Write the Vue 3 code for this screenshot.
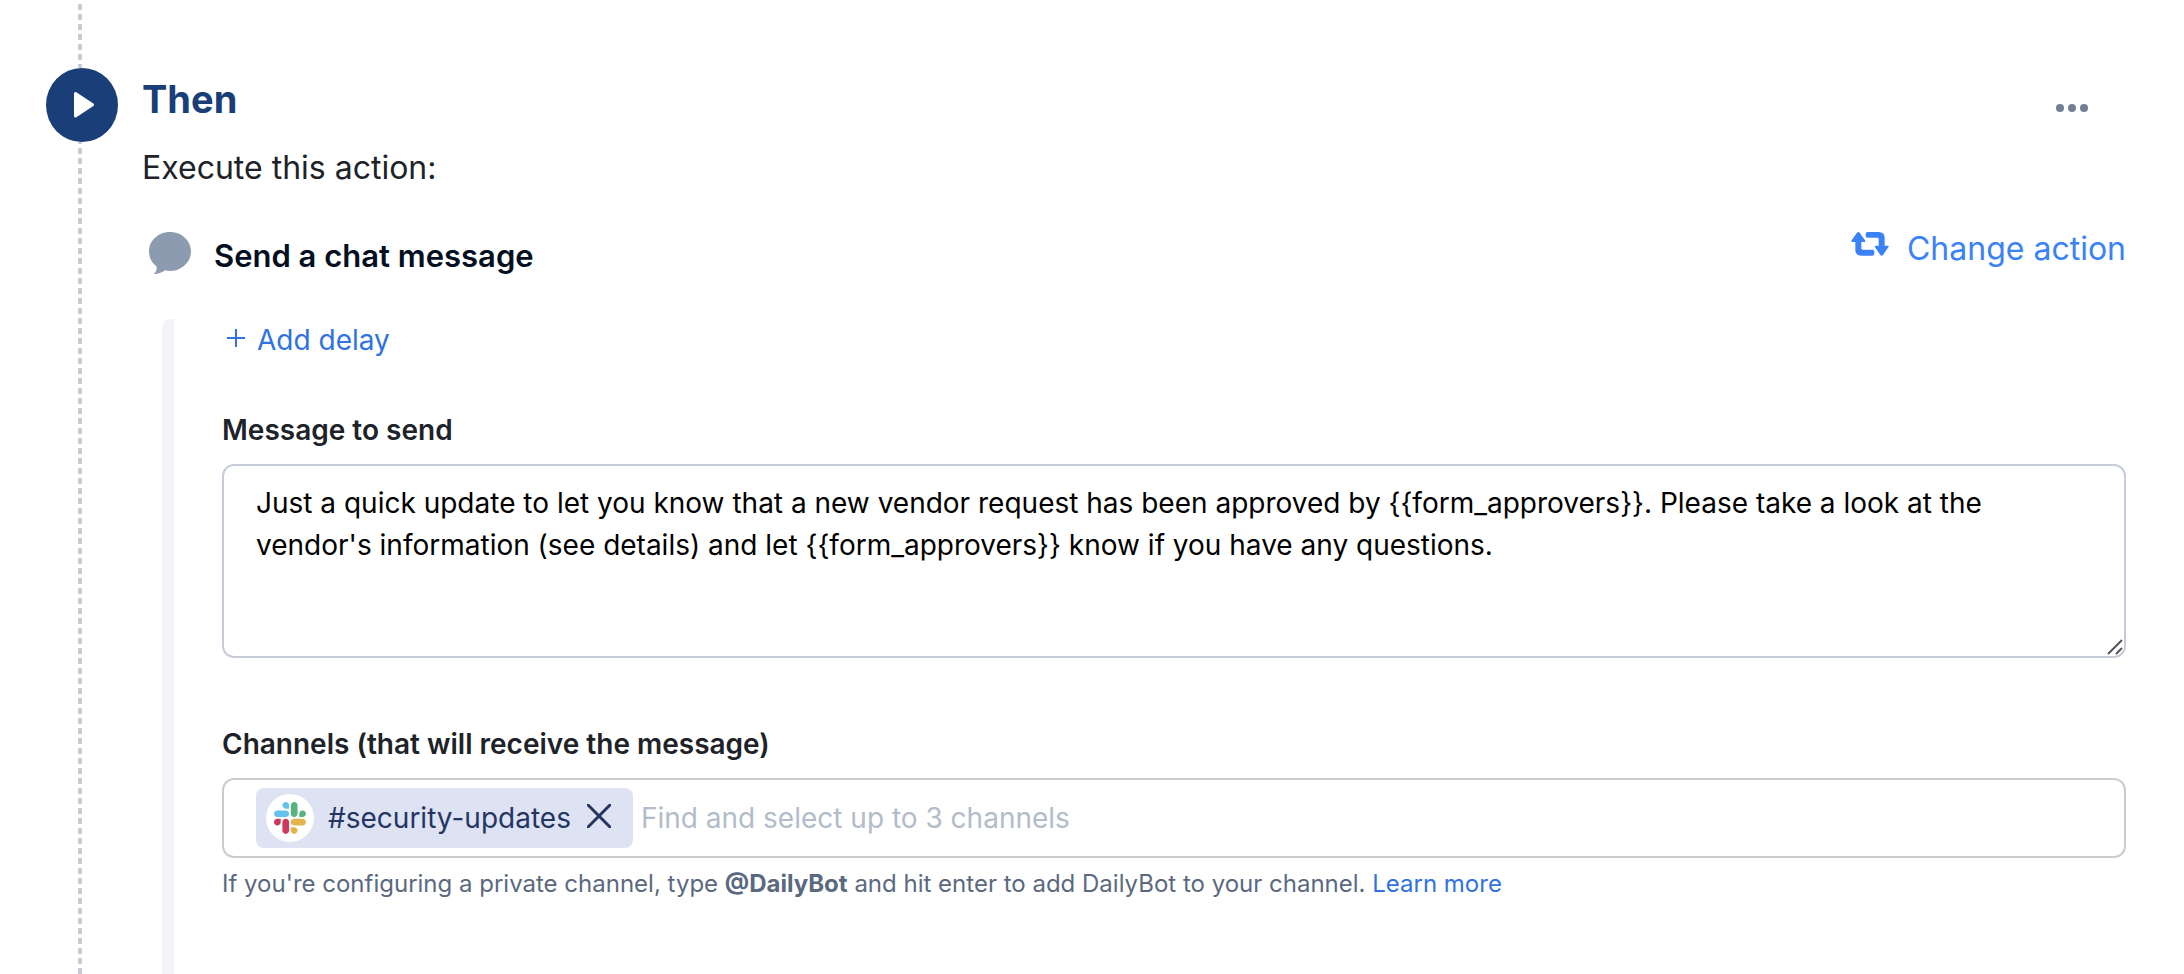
<template>
  <section class="step">
    <div class="rail">
      <div class="line line-top"></div>
      <div class="badge">
        <svg viewBox="0 0 72 74" width="72" height="74" aria-hidden="true">
          <path d="M29.500 25.500v22.500l17-11.250z" fill="#fff" stroke="#fff" stroke-width="3" stroke-linejoin="round" />
        </svg>
      </div>
      <div class="line line-bottom"></div>
    </div>

    <div class="content">
      <header class="step-header">
        <h2>Then</h2>
        <button type="button" class="more" aria-label="More options">
          <svg viewBox="0 0 32 8" width="32" height="8">
            <circle v-for="x in [4, 16, 28]" :key="x" :cx="x" cy="4" r="4" fill="#718096" />
          </svg>
        </button>
      </header>
      <p class="intro">Execute this action:</p>

      <div class="action-row">
        <div class="action-title">
          <svg viewBox="0 0 126 126" width="42" height="42" aria-hidden="true">
            <path fill="#8c9bb0" d="M63 0C98 0 126 26 126 58S98 117 63 117C58 117 53 116 48 115C40 121 30 126 16 126C15 126 15 125 16 124C22 118 25 111 22 103C8 92 0 77 0 58C0 26 28 0 63 0z" />
          </svg>
          <h3>Send a chat message</h3>
        </div>
        <button type="button" class="change">
          <svg viewBox="0 0 114 96" width="38" height="32" aria-hidden="true">
            <g fill="#3b82f6" transform="translate(0 12)">
              <path d="M18 2Q22 -2 26 2L42 25Q44 30 39 30H31V49Q31 53 35 53H64Q70 53 70 59V65Q70 71 64 71H31Q13 71 13 53V30H4Q-1 30 2 25z" />
              <path d="M96 69Q92 73 88 69L72 46Q70 41 75 41H83V21Q83 17 79 17H50Q44 17 44 11V6Q44 0 50 0H83Q101 0 101 18V41H110Q115 41 112 46z" />
            </g>
          </svg>
          Change action
        </button>
      </div>

      <div class="action-body">
        <div class="bar"></div>
        <div class="fields">
          <button type="button" class="delay">
            <svg viewBox="0 0 18 22" width="18" height="22" aria-hidden="true">
              <path d="M9 0v18M0 9h18" stroke="#2f72e0" stroke-width="2" />
            </svg>
            Add delay
          </button>

          <div class="field">
            <label for="message">Message to send</label>
            <div class="textarea-wrap">
              <textarea id="message" v-model="message" spellcheck="false"></textarea>
              <svg class="grip" viewBox="0 0 16 16" width="16" height="16" aria-hidden="true">
                <path d="M1 15L15 1M9 15l6-6" stroke="#555" stroke-width="2" />
              </svg>
            </div>
          </div>

          <div class="field">
            <label for="channels">Channels (that will receive the message)</label>
            <div class="select">
              <div v-for="channel in channels" :key="channel" class="chip">
                <span class="avatar">
                  <svg viewBox="0 0 123 123" width="32" height="32" aria-hidden="true">
                    <path fill="#cf375c" d="M25.800 77.600c0 7.100-5.800 12.900-12.900 12.900S0 84.700 0 77.600s5.800-12.900 12.900-12.900h12.900v12.900zM32.300 77.600c0-7.100 5.800-12.900 12.900-12.900s12.900 5.800 12.900 12.900v32.300c0 7.100-5.800 12.900-12.900 12.900s-12.900-5.800-12.900-12.900V77.600z" />
                    <path fill="#62c2ec" d="M45.200 25.800c-7.100 0-12.900-5.800-12.900-12.900S38.100 0 45.200 0s12.900 5.800 12.900 12.900v12.900H45.200zM45.200 32.300c7.100 0 12.900 5.800 12.900 12.900s-5.800 12.900-12.900 12.900H12.900C5.800 58.100 0 52.300 0 45.200s5.800-12.900 12.900-12.900h32.300z" />
                    <path fill="#59b381" d="M97 45.200c0-7.100 5.800-12.900 12.900-12.900s12.900 5.800 12.900 12.900-5.800 12.900-12.900 12.900H97V45.200zM90.500 45.200c0 7.100-5.800 12.900-12.900 12.900s-12.900-5.800-12.900-12.900V12.900C64.700 5.800 70.500 0 77.600 0s12.900 5.800 12.900 12.900v32.300z" />
                    <path fill="#e3b34c" d="M77.600 97c7.100 0 12.900 5.800 12.900 12.900s-5.800 12.900-12.900 12.900-12.900-5.800-12.900-12.900V97h12.900zM77.600 90.500c-7.100 0-12.900-5.800-12.900-12.900s5.800-12.900 12.900-12.900h32.300c7.100 0 12.900 5.800 12.900 12.900s-5.800 12.900-12.900 12.900H77.600z" />
                  </svg>
                </span>
                <span class="chip-name">{{ channel }}</span>
                <button type="button" class="remove" :aria-label="'Remove ' + channel" @click="removeChannel(channel)">
                  <svg viewBox="0 0 24 24" width="24" height="24">
                    <path d="M1 1l22 22M23 1L1 23" stroke="#243563" stroke-width="3" stroke-linecap="round" />
                  </svg>
                </button>
              </div>
              <input id="channels" v-model="search" type="text" placeholder="Find and select up to 3 channels">
            </div>
            <p class="help">
              If you're configuring a private channel, type <strong>@DailyBot</strong> and hit enter to add DailyBot to your channel.
              <a href="#">Learn more</a>
            </p>
          </div>
        </div>
      </div>
    </div>
  </section>
</template>

<script setup>
  import { ref } from 'vue';

  const message = ref("Just a quick update to let you know that a new vendor request has been approved by {{form_approvers}}. Please take a look at the vendor's information (see details) and let {{form_approvers}} know if you have any questions.");
  const channels = ref(['#security-updates']);
  const search = ref('');

  const removeChannel = (channel) => {
    channels.value = channels.value.filter((c) => c !== channel);
  };
</script>

<style>
  body {
    margin: 0;
    background: #fff;
  }
</style>

<style scoped>
  .step {
    display: flex;
    gap: 24px;
    min-height: 100vh;
    box-sizing: border-box;
    padding: 0 58px 0 46px;
    font-family: Inter, "Liberation Sans", sans-serif;
    color: #1d2329;
  }
  h2, h3, p {
    margin: 0;
  }
  svg {
    display: block;
    flex: none;
  }
  button {
    padding: 0;
    border: 0;
    background: none;
    font: inherit;
    cursor: pointer;
  }
  .rail {
    display: flex;
    flex-direction: column;
    flex: none;
    width: 72px;
  }
  .line {
    width: 4px;
    margin-left: 32px;
    background: linear-gradient(#fff 4px, #c6cdd9 4px) 0 0 / 4px 10px;
  }
  .line-top {
    height: 68px;
  }
  .line-bottom {
    flex: 1;
    background-position: 0 2px;
  }
  .badge {
    height: 74px;
    border-radius: 50%;
    background: #193e78;
  }
  .content {
    flex: 1;
    min-width: 0;
    display: flex;
    flex-direction: column;
    padding-top: 75px;
  }
  .step-header {
    display: flex;
    justify-content: space-between;
    align-items: center;
    padding-right: 38px;
  }
  h2 {
    font-size: 38px;
    line-height: 48px;
    font-weight: 700;
    color: #193e78;
  }
  .more {
    padding-top: 18px;
  }
  .intro {
    margin-top: 25px;
    font-size: 32px;
    line-height: 40px;
  }
  .action-row {
    display: flex;
    justify-content: space-between;
    align-items: flex-start;
    margin-top: 40px;
  }
  .action-title {
    display: flex;
    gap: 23px;
    height: 44px;
    padding: 4px 0 0 7px;
  }
  h3 {
    align-self: flex-end;
    font-size: 31px;
    line-height: 40px;
    font-weight: 600;
    color: #04101f;
  }
  .change {
    display: flex;
    gap: 18px;
    font-size: 32px;
    line-height: 42px;
    color: #3b82f6;
  }
  .action-body {
    display: flex;
    flex: 1;
    gap: 48px;
    margin: 43px 0 0 20px;
  }
  .bar {
    flex: none;
    width: 12px;
    border-top-left-radius: 8px;
    background: #f2f4f8;
  }
  .fields {
    flex: 1;
    min-width: 0;
    padding: 3px 0 48px;
  }
  .delay {
    display: flex;
    align-items: center;
    gap: 12px;
    padding-left: 5px;
    font-size: 28px;
    line-height: 36px;
    color: #2f72e0;
  }
  .field {
    margin-top: 54px;
  }
  .field + .field {
    margin-top: 68px;
  }
  label {
    display: block;
    margin-bottom: 16px;
    font-size: 28px;
    line-height: 36px;
    font-weight: 600;
  }
  .textarea-wrap {
    position: relative;
  }
  textarea {
    display: block;
    box-sizing: border-box;
    width: 100%;
    height: 194px;
    padding: 16px 32px;
    border: 2px solid #c6cdd9;
    border-radius: 12px;
    background: #fff;
    font: 28px/42px Inter, "Liberation Sans", sans-serif;
    color: #000;
    resize: vertical;
  }
  textarea::-webkit-resizer {
    background: transparent;
  }
  .grip {
    position: absolute;
    right: 3px;
    bottom: 3px;
    pointer-events: none;
  }
  .select {
    display: flex;
    align-items: center;
    gap: 8px;
    height: 80px;
    box-sizing: border-box;
    padding: 0 32px;
    border: 2px solid #ccc;
    border-radius: 12px;
  }
  .chip {
    display: flex;
    align-items: center;
    height: 60px;
    padding: 0 22px 0 10px;
    border-radius: 8px;
    background: #dde3f3;
  }
  .avatar {
    display: flex;
    align-items: center;
    justify-content: center;
    width: 48px;
    height: 48px;
    border-radius: 50%;
    background: #fff;
  }
  .chip-name {
    margin: 0 16px 0 14px;
    font-size: 28px;
    line-height: 36px;
    color: #243563;
  }
  .remove {
    padding-bottom: 4px;
  }
  input {
    flex: 1;
    min-width: 0;
    padding: 0;
    border: 0;
    outline: 0;
    background: none;
    font: 28px/36px Inter, "Liberation Sans", sans-serif;
  }
  input::placeholder {
    color: #b3bcc9;
  }
  .help {
    margin-top: 10px;
    font-size: 24px;
    line-height: 32px;
    color: #5a6980;
  }
  .help a {
    color: #2f72e0;
    text-decoration: none;
  }
</style>
